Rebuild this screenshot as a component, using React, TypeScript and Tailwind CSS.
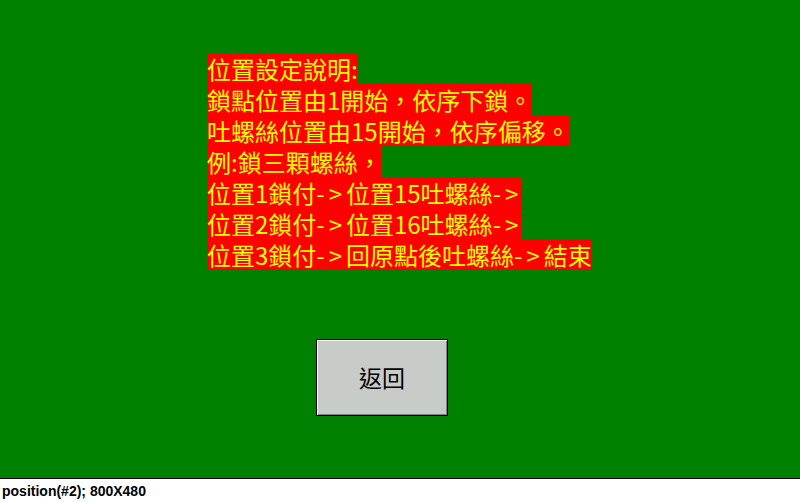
import { Fragment } from "react";

const lines = [
  "位置設定說明:",
  "鎖點位置由1開始，依序下鎖。",
  "吐螺絲位置由15開始，依序偏移。",
  "例:鎖三顆螺絲，",
  "位置1鎖付->位置15吐螺絲->",
  "位置2鎖付->位置16吐螺絲->",
  "位置3鎖付->回原點後吐螺絲->結束",
];

function Line({ text }: { text: string }) {
  const parts = text.split("->");
  return (
    <div className="bg-[#ff0000] text-[#ffff00] text-[24px] leading-[31px] whitespace-pre font-['Noto_Sans_CJK_TC','Noto_Sans_CJK_JP',sans-serif]">
      {parts.map((p, i) => (
        <Fragment key={i}>
          {p}
          {i < parts.length - 1 && (
            <span className="inline-block h-[31px] leading-[31px] tracking-[4px]">-&gt;</span>
          )}
        </Fragment>
      ))}
    </div>
  );
}

export default function App() {
  return (
    <div className="w-[800px] h-[502px] flex flex-col bg-white overflow-hidden">
      <div className="h-[480px] bg-[#008000] flex flex-col">
        <div className="pl-[207px] pt-[53px] flex flex-col items-start">
          {lines.map((line) => (
            <Line key={line} text={line} />
          ))}
        </div>
        <div className="pl-[316px] pt-[69px]">
          <button className="w-[132px] h-[77px] border border-black bg-[#c8ccc8] shadow-[inset_1px_1px_0_#ffffff,inset_-1px_-1px_0_#808080] flex items-center justify-center text-black text-[23px] font-['Noto_Sans_CJK_TC',sans-serif]">
            返回
          </button>
        </div>
      </div>
      <div className="flex-1 border-t border-black px-[2px] pt-[2px] flex items-center text-[14px] font-bold text-black font-['Liberation_Sans',sans-serif]">
        position(#2); 800X480
      </div>
    </div>
  );
}
